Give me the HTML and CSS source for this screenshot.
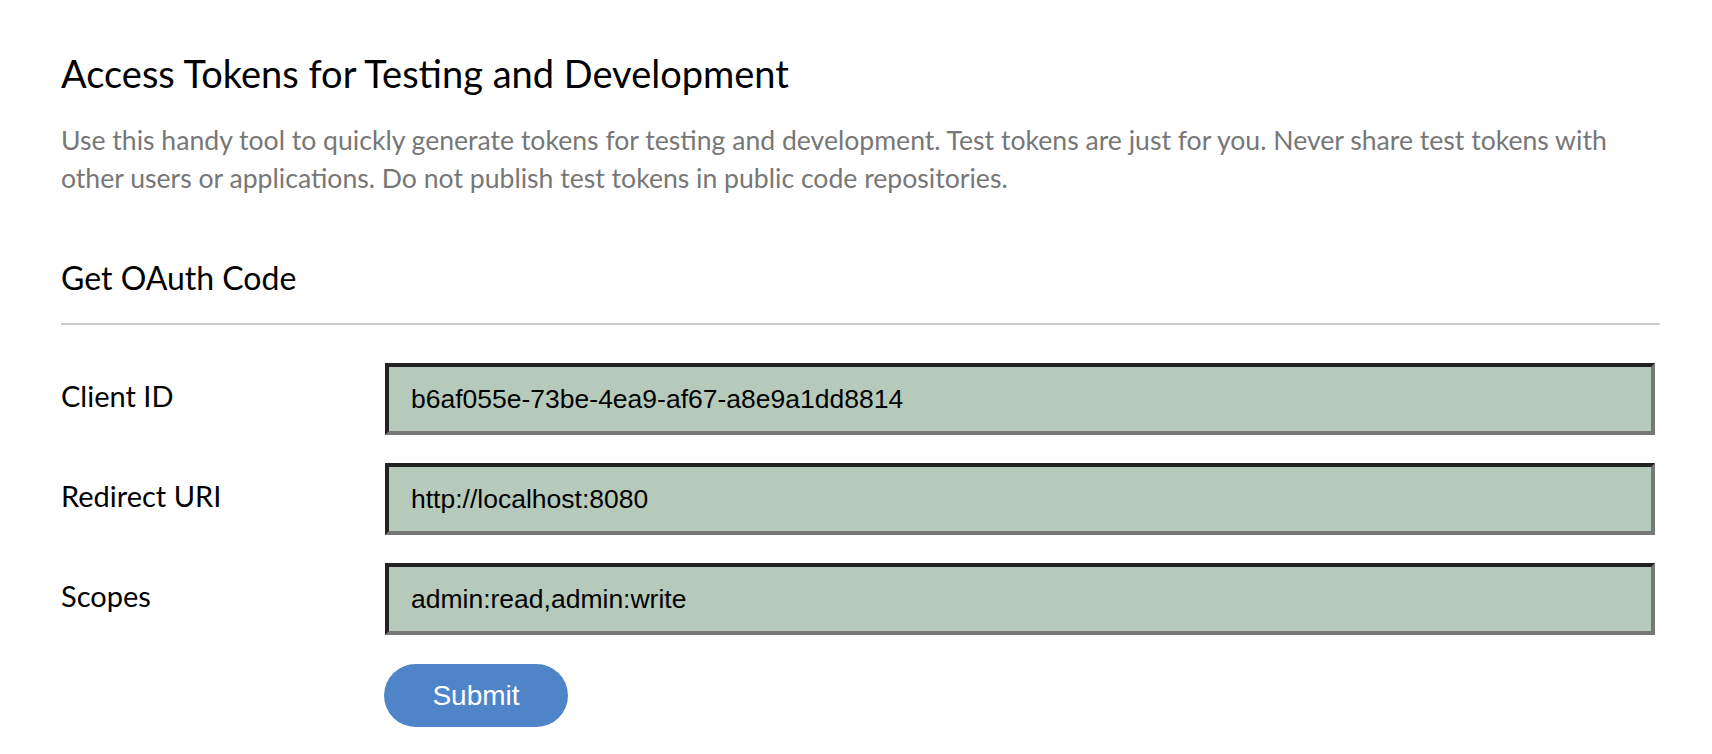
FILE: index.html
```html
<!DOCTYPE html>
<html lang="en">
<head>
<meta charset="utf-8">
<title>Access Tokens for Testing and Development</title>
<link rel="stylesheet" href="styles.css">
</head>
<body>
<main class="page">
  <h1 class="title">Access Tokens for Testing and Development</h1>
  <p class="intro">Use this handy tool to quickly generate tokens for testing and development. Test tokens are just for you. Never share test tokens with other users or applications. Do not publish test tokens in public code repositories.</p>
  <h2 class="subtitle">Get OAuth Code</h2>
  <hr class="divider">
  <form class="form">
    <div class="row">
      <label class="label" for="client">Client ID</label>
      <input class="field" id="client" type="text" value="b6af055e-73be-4ea9-af67-a8e9a1dd8814">
    </div>
    <div class="row">
      <label class="label" for="redirect">Redirect URI</label>
      <input class="field" id="redirect" type="text" value="http://localhost:8080">
    </div>
    <div class="row">
      <label class="label" for="scopes">Scopes</label>
      <input class="field" id="scopes" type="text" value="admin:read,admin:write">
    </div>
    <div class="row actions">
      <span class="label"></span>
      <button class="submit" type="button">Submit</button>
    </div>
  </form>
</main>
</body>
</html>
```
FILE: styles.css
```css
html, body {
  margin: 0;
  padding: 0;
  background: #ffffff;
}

.page {
  width: 1599px;
  padding: 0 0 0 61px;
  font-family: "Lato", "Noto Sans", sans-serif;
  color: #000;
}

.title {
  margin: 0;
  padding-top: 50px;
  font-size: 38px;
  line-height: 46px;
  font-weight: 400;
}

.intro {
  margin: 25px 0 0;
  font-size: 26.6px;
  line-height: 38px;
  color: #777;
}

.subtitle {
  margin: 61px 0 0;
  font-size: 32px;
  line-height: 40px;
  font-weight: 400;
}

.divider {
  margin: 25px 0 0;
  border: 0;
  height: 2px;
  background: #cccccc;
}

.form {
  display: flex;
  flex-direction: column;
  gap: 28px;
  margin-top: 38px;
}

.row {
  display: flex;
  align-items: center;
}

.label {
  width: 324px;
  flex: none;
  font-size: 29px;
  line-height: 34px;
  padding-bottom: 6px;
}

.field {
  width: 1270px;
  height: 72px;
  box-sizing: border-box;
  margin: 0;
  padding: 0 0 0 22px;
  background: #b5cabb;
  border-style: solid;
  border-width: 4px 4px 4px 4px;
  border-color: #222 #777 #777 #222;
  font-family: "Liberation Sans", Arial, sans-serif;
  font-size: 26.5px;
  color: #000;
  outline: none;
}

.actions {
  margin-top: 1px;
}

.submit {
  width: 184px;
  height: 63px;
  margin-left: -1px;
  border: 0;
  border-radius: 32px;
  background: #5084c9;
  color: #fff;
  font-family: "Liberation Sans", Arial, sans-serif;
  font-size: 28px;
  padding: 0;
}
```
